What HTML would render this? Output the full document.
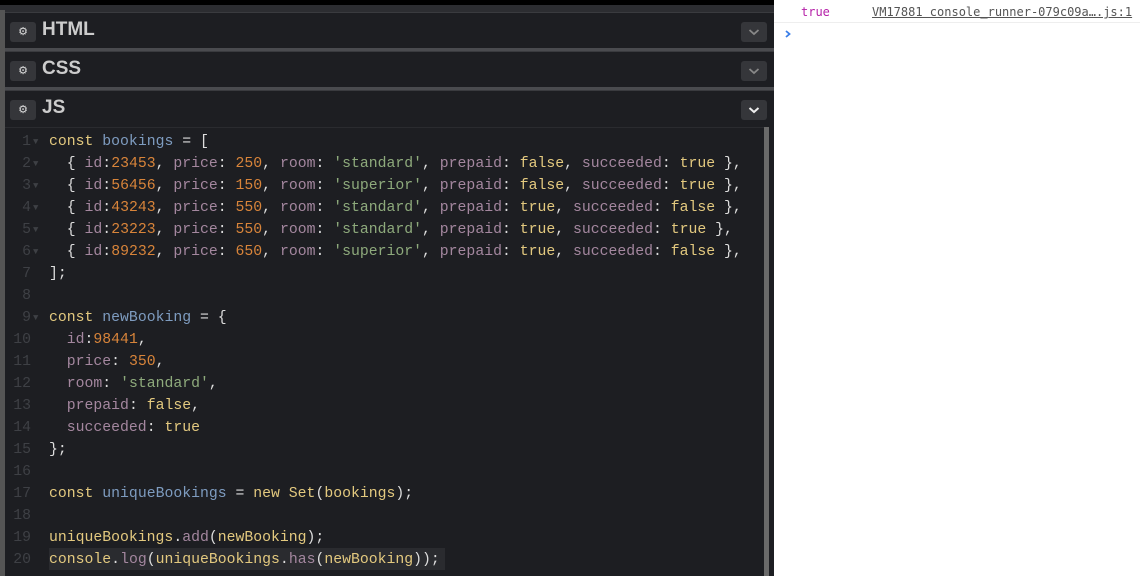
<!DOCTYPE html>
<html><head><meta charset="utf-8"><style>
*{margin:0;padding:0;box-sizing:border-box}
body{width:1140px;height:576px;overflow:hidden;background:#fff;position:relative;font-family:"Liberation Sans",sans-serif}
.left{position:absolute;left:0;top:0;width:774px;height:576px;background:#1d1e22}
.topbar{position:absolute;left:0;top:0;width:774px;height:5px;background:#000}
.stripe{position:absolute;left:0;top:5px;width:774px;height:7px;background:#2c2d31}
.lbar{position:absolute;left:0;top:10px;width:5px;height:566px;background:#555}
.hdr{position:absolute;left:5px;width:769px;height:36px;background:#1d1e22;border-top:1px solid #3a3b3f}
.sep{position:absolute;left:5px;width:769px;height:3px;background:#4a4b4f}
.gear{position:absolute;left:5px;top:9px;width:26px;height:20px;background:#35363a;border-radius:3px;color:#ddd;font-size:11px;text-align:center;line-height:20px}
.ttl{position:absolute;left:37px;top:6px;color:#ccc;font-weight:bold;font-size:19px}
.chev{position:absolute;left:736px;top:9px;width:26px;height:20px;background:#35363a;border-radius:3px}
.code{position:absolute;left:5px;top:127px;width:759px;height:449px;background:#1d1e22;border-top:1px solid #2a2b2f;font-family:"Liberation Mono",monospace;font-size:14.8px}
.ln{position:absolute;left:0;width:26px;text-align:right;color:#3e4045;height:22px;line-height:22px}
.fd{position:absolute;left:28px;color:#3e4045;font-size:9px;line-height:22px}
.cl{position:absolute;left:44px;white-space:pre;color:#ddd;height:22px;line-height:22px}
.k{color:#e3c97f}.v{color:#7e9cc0}.p{color:#a4879f}.n{color:#d8843a}.s{color:#8eaa7c}
.sb{position:absolute;left:764px;top:127px;width:5px;height:449px;background:#6a6a6a}
.console{position:absolute;left:774px;top:0;width:366px;height:576px;background:#fff}
</style></head><body>
<div class="left"></div>
<div class="topbar"></div><div class="stripe"></div><div class="lbar"></div>
<div class="hdr" style="top:12px"><div class="gear">⚙</div><div class="ttl">HTML</div><div class="chev"><svg width="26" height="20"><path d="M8.5 8l4.5 4 4.5-4" stroke="#888" stroke-width="1.8" fill="none"/></svg></div></div>
<div class="sep" style="top:48px"></div>
<div class="hdr" style="top:51px"><div class="gear">⚙</div><div class="ttl">CSS</div><div class="chev"><svg width="26" height="20"><path d="M8.5 8l4.5 4 4.5-4" stroke="#888" stroke-width="1.8" fill="none"/></svg></div></div>
<div class="sep" style="top:87px"></div>
<div class="hdr" style="top:90px"><div class="gear">⚙</div><div class="ttl">JS</div><div class="chev"><svg width="26" height="20"><path d="M8.5 8l4.5 4 4.5-4" stroke="#eee" stroke-width="2" fill="none"/></svg></div></div>
<div class="code">
<div style="position:absolute;left:44px;top:420px;width:396px;height:22px;background:#2a2b2f"></div>
<div class="ln" style="top:3px">1</div><div class="fd" style="top:3px">▼</div><div class="cl" style="top:3px"><span class="k">const</span> <span class="v">bookings</span> = [</div>
<div class="ln" style="top:25px">2</div><div class="fd" style="top:25px">▼</div><div class="cl" style="top:25px">  { <span class="p">id</span>:<span class="n">23453</span>, <span class="p">price</span>: <span class="n">250</span>, <span class="p">room</span>: <span class="s">'standard'</span>, <span class="p">prepaid</span>: <span class="k">false</span>, <span class="p">succeeded</span>: <span class="k">true</span> },</div>
<div class="ln" style="top:47px">3</div><div class="fd" style="top:47px">▼</div><div class="cl" style="top:47px">  { <span class="p">id</span>:<span class="n">56456</span>, <span class="p">price</span>: <span class="n">150</span>, <span class="p">room</span>: <span class="s">'superior'</span>, <span class="p">prepaid</span>: <span class="k">false</span>, <span class="p">succeeded</span>: <span class="k">true</span> },</div>
<div class="ln" style="top:69px">4</div><div class="fd" style="top:69px">▼</div><div class="cl" style="top:69px">  { <span class="p">id</span>:<span class="n">43243</span>, <span class="p">price</span>: <span class="n">550</span>, <span class="p">room</span>: <span class="s">'standard'</span>, <span class="p">prepaid</span>: <span class="k">true</span>, <span class="p">succeeded</span>: <span class="k">false</span> },</div>
<div class="ln" style="top:91px">5</div><div class="fd" style="top:91px">▼</div><div class="cl" style="top:91px">  { <span class="p">id</span>:<span class="n">23223</span>, <span class="p">price</span>: <span class="n">550</span>, <span class="p">room</span>: <span class="s">'standard'</span>, <span class="p">prepaid</span>: <span class="k">true</span>, <span class="p">succeeded</span>: <span class="k">true</span> },</div>
<div class="ln" style="top:113px">6</div><div class="fd" style="top:113px">▼</div><div class="cl" style="top:113px">  { <span class="p">id</span>:<span class="n">89232</span>, <span class="p">price</span>: <span class="n">650</span>, <span class="p">room</span>: <span class="s">'superior'</span>, <span class="p">prepaid</span>: <span class="k">true</span>, <span class="p">succeeded</span>: <span class="k">false</span> },</div>
<div class="ln" style="top:135px">7</div><div class="cl" style="top:135px">];</div>
<div class="ln" style="top:157px">8</div>
<div class="ln" style="top:179px">9</div><div class="fd" style="top:179px">▼</div><div class="cl" style="top:179px"><span class="k">const</span> <span class="v">newBooking</span> = {</div>
<div class="ln" style="top:201px">10</div><div class="cl" style="top:201px">  <span class="p">id</span>:<span class="n">98441</span>,</div>
<div class="ln" style="top:223px">11</div><div class="cl" style="top:223px">  <span class="p">price</span>: <span class="n">350</span>,</div>
<div class="ln" style="top:245px">12</div><div class="cl" style="top:245px">  <span class="p">room</span>: <span class="s">'standard'</span>,</div>
<div class="ln" style="top:267px">13</div><div class="cl" style="top:267px">  <span class="p">prepaid</span>: <span class="k">false</span>,</div>
<div class="ln" style="top:289px">14</div><div class="cl" style="top:289px">  <span class="p">succeeded</span>: <span class="k">true</span></div>
<div class="ln" style="top:311px">15</div><div class="cl" style="top:311px">};</div>
<div class="ln" style="top:333px">16</div>
<div class="ln" style="top:355px">17</div><div class="cl" style="top:355px"><span class="k">const</span> <span class="v">uniqueBookings</span> = <span class="k">new</span> <span class="k">Set</span>(<span class="k">bookings</span>);</div>
<div class="ln" style="top:377px">18</div>
<div class="ln" style="top:399px">19</div><div class="cl" style="top:399px"><span class="k">uniqueBookings</span>.<span class="p">add</span>(<span class="k">newBooking</span>);</div>
<div class="ln" style="top:421px">20</div><div class="cl" style="top:421px"><span class="k">console</span>.<span class="p">log</span>(<span class="k">uniqueBookings</span>.<span class="p">has</span>(<span class="k">newBooking</span>));</div>
</div>
<div class="sb"></div>
<div class="console">
<div style="position:absolute;left:0;top:0;width:366px;height:23px;border-bottom:1px solid #eee"></div>
<div style="position:absolute;left:27px;top:5px;font-family:'DejaVu Sans Mono',monospace;font-size:12px;color:#b521a8">true</div>
<div style="position:absolute;left:98px;top:5px;font-family:'DejaVu Sans Mono',monospace;font-size:12px;color:#555;text-decoration:underline;white-space:nowrap">VM17881 console_runner-079c09a….js:1</div>
<svg style="position:absolute;left:9px;top:28px" width="10" height="12"><path d="M3 3l3.5 3-3.5 3" stroke="#3a7ee8" stroke-width="1.8" fill="none"/></svg>
</div>
</body></html>
